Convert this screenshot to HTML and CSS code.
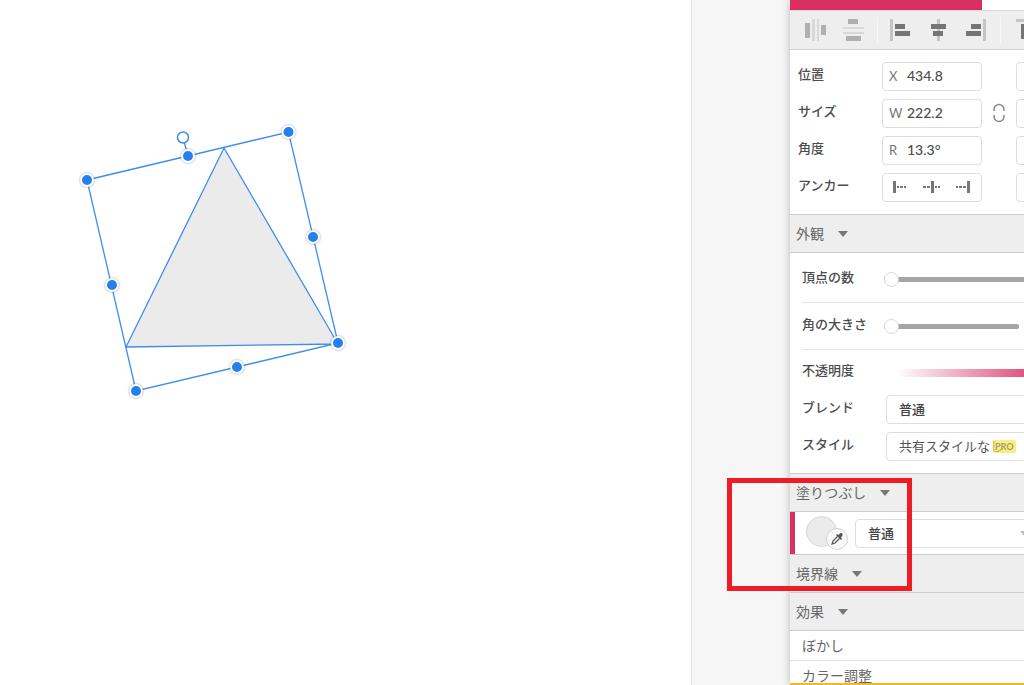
FILE: index.html
```
<!DOCTYPE html>
<html lang="ja">
<head>
    <meta charset="UTF-8">
    <meta name="viewport" content="width=device-width, initial-scale=1.0">
    <title>Editor</title>
    <link rel="stylesheet" href="styles.css">
</head>
<body>

<main class="canvas">
    <svg class="shape" width="400" height="420" viewBox="0 0 400 420">
        <polygon points="224,148 338,344 126,347" fill="#ebebeb" stroke="#3c8dee" stroke-width="1.300"/>
        <g fill="none" stroke="#3c8dee" stroke-width="1.300">
            <polygon points="87,180 288.5,132 338,343 136,391"/>
            <path d="M188 156L183 138"/>
        </g>
        <circle cx="183" cy="137.500" r="5.500" fill="#fff" stroke="#3c8dee" stroke-width="1.500"/>
        <g class="handles">
            <circle cx="87" cy="180" r="6"/>
            <circle cx="188" cy="156" r="6"/>
            <circle cx="288.500" cy="132" r="6"/>
            <circle cx="313" cy="237" r="6"/>
            <circle cx="338" cy="343" r="6"/>
            <circle cx="237" cy="367" r="6"/>
            <circle cx="136" cy="391" r="6"/>
            <circle cx="112" cy="285" r="6"/>
        </g>
    </svg>
</main>
<div class="gutter"></div>

<aside class="panel">
    <div class="panel-inner">
        <div class="tabs">
            <button type="button" class="tab active" aria-label="Design"></button>
        </div>

        <div class="toolbar">
            <button type="button" class="tool" aria-label="Distribute horizontally">
                <svg width="24" height="22"><path d="M1 4h5v15H1zM17 6h5v10h-5z" fill="#b0b0b0"/><path d="M8 0h3v22H8zM13 0h2v22h-2z" fill="#d8d8d8"/></svg>
            </button>
            <button type="button" class="tool" aria-label="Distribute vertically">
                <svg width="24" height="22"><path d="M6 0h10v5H6zM4 17h15v5H4z" fill="#b0b0b0"/><path d="M1 8h21v2H1zM1 13h21v2H1z" fill="#d8d8d8"/></svg>
            </button>
            <span class="separator"></span>
            <button type="button" class="tool" aria-label="Align left">
                <svg width="24" height="22"><path d="M1 0h3v22H1z" fill="#c4c4c4"/><path d="M6 5h10v5H6zM6 12h15v5H6z" fill="#757575"/></svg>
            </button>
            <button type="button" class="tool" aria-label="Align center">
                <svg width="24" height="22"><path d="M10 0h3v22h-3z" fill="#c4c4c4"/><path d="M4 5h15v5H4zM6 12h10v5H6z" fill="#757575"/></svg>
            </button>
            <button type="button" class="tool" aria-label="Align right">
                <svg width="24" height="22"><path d="M18 0h3v22h-3z" fill="#c4c4c4"/><path d="M6 5h10v5H6zM1 12h15v5H1z" fill="#757575"/></svg>
            </button>
            <span class="separator"></span>
            <button type="button" class="tool" aria-label="Align top">
                <svg width="24" height="22"><path d="M4 0h20v3H4z" fill="#c4c4c4"/><path d="M9 5h5v15H9zM16 5h5v10h-5z" fill="#757575"/></svg>
            </button>
        </div>

        <div class="properties">
            <div class="row">
                <label class="label" for="pos-x">位置</label>
                <div class="field"><span class="prefix">X</span><input type="text" id="pos-x" value="434.8"></div>
                <span class="link-space"></span>
                <div class="field"><input type="text" id="pos-y" aria-label="Y"></div>
            </div>
            <div class="row">
                <label class="label" for="size-w">サイズ</label>
                <div class="field"><span class="prefix">W</span><input type="text" id="size-w" value="222.2"></div>
                <button type="button" class="link-space" aria-label="Lock ratio">
                    <svg width="14" height="20" fill="none" stroke="#8a8a8a" stroke-width="1.500"><path d="M2 8V6.500a5 5 0 0 1 10 0V8M2 12v1.500a5 5 0 0 0 10 0V12"/></svg>
                </button>
                <div class="field"><input type="text" id="size-h" aria-label="H"></div>
            </div>
            <div class="row">
                <label class="label" for="angle">角度</label>
                <div class="field"><span class="prefix">R</span><input type="text" id="angle" value="13.3°"></div>
                <span class="link-space"></span>
                <div class="field"></div>
            </div>
            <div class="row">
                <span class="label">アンカー</span>
                <div class="field anchors">
                    <button type="button" aria-label="Anchor left">
                        <svg width="18" height="12"><path d="M1 0h3v12H1zM5 5h2v2H5zM8 5h3v2H8zM12 5h2v2h-2z" fill="#777"/></svg>
                    </button>
                    <button type="button" aria-label="Anchor center">
                        <svg width="18" height="12"><path d="M8 0h3v12H8zM0 5h3v2H0zM4 5h3v2H4zM12 5h2v2h-2zM15 5h2v2h-2z" fill="#777"/></svg>
                    </button>
                    <button type="button" aria-label="Anchor right">
                        <svg width="18" height="12"><path d="M13 0h3v12h-3zM2 5h2v2H2zM5 5h3v2H5zM9 5h3v2H9z" fill="#777"/></svg>
                    </button>
                </div>
                <span class="link-space"></span>
                <div class="field"></div>
            </div>
        </div>

        <button type="button" class="section-header">外観 <span class="caret"></span></button>
        <div class="appearance">
            <div class="slider-row">
                <label class="label" for="points">頂点の数</label>
                <input type="range" id="points" class="slider long" value="0">
            </div>
            <div class="slider-row">
                <label class="label" for="corner">角の大きさ</label>
                <input type="range" id="corner" class="slider" value="0">
            </div>
            <div class="slider-row last">
                <label class="label" for="opacity">不透明度</label>
                <input type="range" id="opacity" class="slider long opacity" value="100">
            </div>
            <div class="select-row">
                <label class="label" for="blend">ブレンド</label>
                <select id="blend" class="select"><option>普通</option></select>
            </div>
            <div class="select-row">
                <label class="label" for="style">スタイル</label>
                <select id="style" class="select plain"><option>共有スタイルなし</option></select>
                <span class="pro">PRO</span>
            </div>
        </div>

        <button type="button" class="section-header">塗りつぶし <span class="caret"></span></button>
        <div class="fill-row">
            <div class="swatch">
                <button type="button" class="color" aria-label="Fill color"></button>
                <button type="button" class="picker" aria-label="Pick color">
                    <svg width="14" height="14" viewBox="0 0 14 14"><path d="M7.500 4.500L3 9l-1 3 3-1 4.500-4.500" fill="none" stroke="#555" stroke-width="1.200"/><path d="M6 3l1-1 1.500 1L10 1.500c1.500-1.300 3.500.500 2.300 2.300L11 5.500 12 7l-1 1z" fill="#555"/></svg>
                </button>
            </div>
            <select class="select fill-select" aria-label="Fill mode"><option>普通</option></select>
            <span class="caret light"></span>
        </div>
        <button type="button" class="section-header">境界線 <span class="caret"></span></button>
        <button type="button" class="section-header stacked">効果 <span class="caret"></span></button>
        <button type="button" class="effect">ぼかし</button>
        <button type="button" class="effect">カラー調整</button>
    </div>
    <div class="panel-end"></div>
</aside>

<div class="highlight"></div>

</body>
</html>
```
FILE: styles.css
```
* {
    box-sizing: border-box;
}
body {
    font-family: Lato, "Noto Sans CJK JP", sans-serif;
    font-size: 13px;
    color: #4d4d4d;
    background-color: #fff;
    margin: 0;
    display: flex;
    height: 100vh;
    overflow: hidden;
    position: relative;
}
button {
    font: inherit;
    color: inherit;
    background: none;
    border: none;
    padding: 0;
    cursor: pointer;
}
svg {
    display: block;
}
.canvas {
    flex: 1;
    min-width: 0;
    overflow: hidden;
}
.handles circle {
    fill: #2680eb;
    stroke: #fff;
    stroke-width: 2px;
    filter: drop-shadow(0 0 1px rgba(0, 0, 0, 0.4));
}
.gutter {
    width: 99px;
    background-color: #f6f6f6;
    border-left: 1px solid #e4e4e4;
}

/* side panel */
.panel {
    width: 234px;
    background-color: #fff;
    box-shadow: 0 0 8px rgba(0, 0, 0, 0.25);
    display: flex;
    flex-direction: column;
    position: relative;
}
.panel-inner {
    flex: 1;
    min-height: 0;
    overflow: hidden;
}
.panel-end {
    height: 2px;
    background-color: #f5b52e;
}
.tabs {
    height: 11px;
    border-bottom: 1px solid #d8d8d8;
    display: flex;
}
.tab.active {
    width: 192px;
    background-color: #d92f63;
}
.toolbar {
    width: 330px;
    height: 39px;
    display: flex;
    align-items: center;
    gap: 14px;
    padding-left: 14px;
    background-color: #eee;
    border-bottom: 1px solid #d0d0d0;
}
.tool {
    flex: none;
}
.separator {
    width: 1px;
    height: 26px;
    margin: 0 -3px;
    background-color: #f8f8f8;
}

.properties {
    width: 330px;
    padding: 12px 8px;
    display: flex;
    flex-direction: column;
    gap: 8px;
}
.row {
    display: flex;
    height: 29px;
}
.label {
    width: 84px;
    flex: none;
    line-height: 20px;
    padding: 2px 0 7px;
    font-weight: 500;
}
.field {
    width: 100px;
    flex: none;
    display: flex;
    align-items: center;
    padding: 0 6px 2px;
    border: 1px solid #ddd;
    border-radius: 4px;
}
.prefix {
    width: 18px;
    color: #777;
}
.field input {
    min-width: 0;
    flex: 1;
    font: inherit;
    font-size: 14px;
    font-weight: 500;
    color: inherit;
    border: none;
    padding: 0;
    outline: none;
    background: none;
}
.link-space {
    width: 34px;
    flex: none;
    display: flex;
    align-items: center;
    justify-content: center;
    padding-bottom: 2px;
}
.anchors {
    justify-content: space-between;
    padding: 0 9px 2px;
}

.section-header {
    width: 100%;
    height: 39px;
    display: flex;
    align-items: center;
    gap: 14px;
    padding: 0 6px 2px;
    font-size: 14px;
    color: #666;
    background-color: #eee;
    border-top: 1px solid #ccc;
    border-bottom: 1px solid #ccc;
}
.section-header.stacked {
    height: 38px;
    border-top: none;
}
.caret {
    margin-top: 2px;
    border: 5px solid transparent;
    border-top: 6px solid #777;
    border-bottom: none;
}

.appearance {
    width: 330px;
    padding: 0 12px 12px;
}
.slider-row {
    height: 47px;
    display: flex;
    align-items: center;
    border-bottom: 1px solid #e4e4e4;
}
.slider-row:first-child {
    height: 50px;
    padding-top: 3px;
}
.slider-row.last {
    height: 45px;
    border: none;
}
.slider-row .label {
    width: 82px;
}
.slider {
    appearance: none;
    width: 135px;
    height: 16px;
    margin: 0;
    background: none;
}
.slider.long {
    width: 180px;
}
.slider::-webkit-slider-runnable-track {
    height: 5px;
    border-radius: 2px;
    background-color: #a5a5a5;
}
.slider::-webkit-slider-thumb {
    appearance: none;
    width: 15px;
    height: 15px;
    margin-top: -5px;
    background-color: #fff;
    border: 1px solid #d8d8d8;
    border-radius: 50%;
}
.slider.opacity::-webkit-slider-runnable-track {
    height: 8px;
    background: linear-gradient(to right, #fff 12px, #d92f63 170px);
}
.select-row {
    display: flex;
    height: 29px;
    margin-bottom: 8px;
    position: relative;
}
.select-row:last-child {
    margin-bottom: 0;
}
.select {
    appearance: none;
    width: 180px;
    height: 29px;
    padding: 0 12px 2px;
    font: inherit;
    font-weight: 500;
    color: #444;
    background-color: #fff;
    border: 1px solid #ddd;
    border-radius: 4px;
}
.select.plain {
    font-weight: 400;
    color: #555;
}
.pro {
    position: absolute;
    left: 191px;
    top: 8px;
    padding: 0 2px;
    font-size: 9px;
    font-weight: 700;
    line-height: 13px;
    color: #a3a06c;
    background-color: rgba(250, 230, 80, 0.7);
    border-radius: 2px;
}

.fill-row {
    width: 330px;
    height: 42px;
    display: flex;
    align-items: center;
    padding-left: 11px;
    border-left: 5px solid #d92f63;
    position: relative;
}
.fill-select {
    padding-bottom: 0;
}
.swatch {
    width: 49px;
    height: 34px;
    position: relative;
}
.color {
    display: block;
    width: 31px;
    height: 31px;
    background-color: #ebebeb;
    border: 1px solid #d8d8d8;
    border-radius: 50%;
}
.picker {
    position: absolute;
    left: 20px;
    top: 12px;
    width: 22px;
    height: 22px;
    display: flex;
    align-items: center;
    justify-content: center;
    background-color: #f8f8f8;
    border: 1px solid #d4d4d4;
    border-radius: 50%;
}
.caret.light {
    margin-left: -15px;
    border-top-color: #bbb;
}
.effect {
    display: block;
    width: 100%;
    height: 30px;
    padding-left: 12px;
    text-align: left;
    font-size: 14px;
    line-height: 29px;
    color: #666;
    border-bottom: 1px solid #ddd;
}

/* red marker over the fill section */
.highlight {
    position: absolute;
    right: 112px;
    top: 478px;
    width: 185px;
    height: 113px;
    border: 5px solid #ee1c24;
    pointer-events: none;
}
```
